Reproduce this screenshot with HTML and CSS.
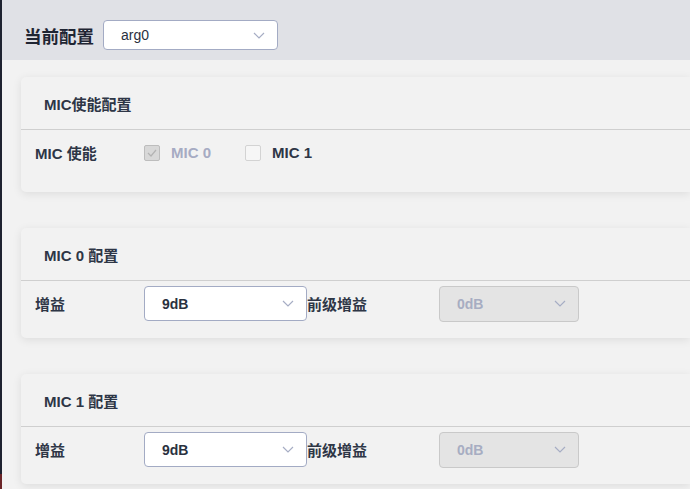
FILE: index.html
```html
<!DOCTYPE html>
<html lang="zh-CN">
<head>
<meta charset="utf-8">
<title>配置</title>
<link rel="stylesheet" href="styles.css">
</head>
<body>
<div class="edge"></div>
<div class="main">
  <header class="topbar">
    <span class="topbar-title">当前配置</span>
    <div class="select select-top">
      <span class="select-value">arg0</span>
      <svg class="chevron" width="12" height="7" viewBox="0 0 12 7"><path d="M1 1l5 5 5-5" fill="none" stroke="#a6adc4" stroke-width="1.2"/></svg>
    </div>
  </header>
  <div class="content">
    <section class="card">
      <div class="card-head">MIC使能配置</div>
      <div class="card-body card-body-tall">
        <div class="row">
          <span class="label">MIC 使能</span>
          <label class="check is-disabled">
            <span class="box box-checked">
              <svg width="10" height="8" viewBox="0 0 10 8"><path d="M1 4l3 3 5-6" fill="none" stroke="#b3b3b3" stroke-width="1.2"/></svg>
            </span>
            <span class="check-text">MIC 0</span>
          </label>
          <label class="check">
            <span class="box"></span>
            <span class="check-text">MIC 1</span>
          </label>
        </div>
      </div>
    </section>

    <section class="card">
      <div class="card-head">MIC 0 配置</div>
      <div class="card-body">
        <div class="row">
          <span class="label">增益</span>
          <div class="select select-gain">
            <span class="select-value">9dB</span>
            <svg class="chevron" width="12" height="7" viewBox="0 0 12 7"><path d="M1 1l5 5 5-5" fill="none" stroke="#a6adc4" stroke-width="1.2"/></svg>
          </div>
          <span class="label label-wide">前级增益</span>
          <div class="select select-pre is-disabled">
            <span class="select-value">0dB</span>
            <svg class="chevron" width="12" height="7" viewBox="0 0 12 7"><path d="M1 1l5 5 5-5" fill="none" stroke="#a6adc4" stroke-width="1.2"/></svg>
          </div>
        </div>
      </div>
    </section>

    <section class="card">
      <div class="card-head">MIC 1 配置</div>
      <div class="card-body">
        <div class="row">
          <span class="label">增益</span>
          <div class="select select-gain">
            <span class="select-value">9dB</span>
            <svg class="chevron" width="12" height="7" viewBox="0 0 12 7"><path d="M1 1l5 5 5-5" fill="none" stroke="#a6adc4" stroke-width="1.2"/></svg>
          </div>
          <span class="label label-wide">前级增益</span>
          <div class="select select-pre is-disabled">
            <span class="select-value">0dB</span>
            <svg class="chevron" width="12" height="7" viewBox="0 0 12 7"><path d="M1 1l5 5 5-5" fill="none" stroke="#a6adc4" stroke-width="1.2"/></svg>
          </div>
        </div>
      </div>
    </section>
  </div>
</div>
</body>
</html>
```

FILE: styles.css
```css
* { box-sizing: border-box; }
html, body { height: 100%; }
body {
  margin: 0;
  display: flex;
  overflow: hidden;
  background: #f2f2f2;
  font-family: "Liberation Sans", Arial, "Noto Sans CJK SC", sans-serif;
  color: #2e3646;
}
.edge {
  width: 2px;
  flex: none;
  background: linear-gradient(to bottom, #1e2230 0, #1e2230 474px, #6a2428 474px);
}
.main {
  flex: 1;
  min-width: 0;
}
.topbar {
  height: 60px;
  background: #e0e1e6;
  display: flex;
  align-items: center;
  padding: 10px 0 0 22px;
  gap: 9px;
}
.topbar-title {
  font-size: 17.5px;
  font-weight: 700;
  color: #1f2533;
}
.select {
  height: 30px;
  background: #fff;
  border: 1px solid #a3abc4;
  border-radius: 4px;
  display: flex;
  align-items: center;
  justify-content: space-between;
  padding: 0 12px 0 17px;
}
.select-top { width: 175px; }
.select-top .select-value { font-size: 14px; font-weight: 400; color: #2a3140; }
.select-value {
  font-size: 14px;
  font-weight: 700;
  color: #2a3140;
}
.chevron { flex: none; }
.select-gain { width: 163px; height: 35px; }
.select-pre { width: 140px; height: 36px; }
.select.is-disabled {
  background: #e4e4e4;
  border-color: #c9c9c9;
}
.select.is-disabled .select-value { color: #a7adc2; }
.content {
  padding: 17px 0 0 19px;
  display: flex;
  flex-direction: column;
  gap: 36px;
}
.card {
  background: #f2f2f2;
  border-radius: 5px 0 0 5px;
  box-shadow: 0 2px 10px rgba(0, 0, 0, 0.09);
}
.card-head {
  height: 53px;
  border-bottom: 1px solid #cfcfcf;
  display: flex;
  align-items: center;
  padding-left: 23px;
  font-size: 15px;
  font-weight: 700;
}
.card-body {
  padding: 5px 14px 17px;
}
.card-body-tall { padding-bottom: 22px; }
.row {
  height: 35px;
  display: flex;
  align-items: center;
}
.label {
  width: 109px;
  flex: none;
  font-size: 15px;
  font-weight: 700;
}
.label-wide { width: 132px; }
.check {
  display: flex;
  align-items: center;
  gap: 11px;
  margin-right: 34px;
}
.box {
  width: 16px;
  height: 16px;
  border: 1px solid #d3d3d3;
  border-radius: 2px;
  background: #f6f6f6;
  display: flex;
  align-items: center;
  justify-content: center;
}
.box-checked {
  background: #d8d8d8;
  border-color: #bdbdbd;
}
.check-text {
  font-size: 15px;
  font-weight: 700;
}
.check.is-disabled .check-text { color: #a6abc3; }
```
